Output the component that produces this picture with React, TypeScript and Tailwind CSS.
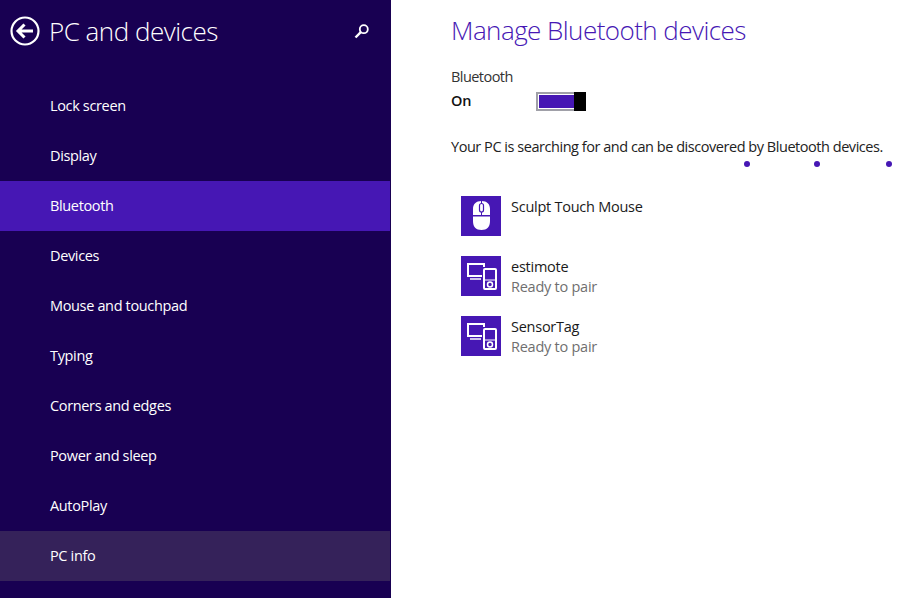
import { ReactNode } from "react";

const font = "font-['Open_Sans','Noto_Sans',sans-serif]";

const menu = [
  "Lock screen",
  "Display",
  "Bluetooth",
  "Devices",
  "Mouse and touchpad",
  "Typing",
  "Corners and edges",
  "Power and sleep",
  "AutoPlay",
  "PC info",
];

function BackIcon() {
  return (
    <svg width="30" height="30" viewBox="0 0 30 30" fill="none" stroke="white" className="shrink-0">
      <circle cx="15" cy="15" r="13.5" strokeWidth="2.2" />
      <path d="M8 15h15M14.5 8.5 8 15l6.5 6.5" strokeWidth="3" />
    </svg>
  );
}

function SearchIcon() {
  return (
    <svg width="16" height="16" viewBox="0 0 16 16" fill="none" stroke="white">
      <circle cx="9.8" cy="6.2" r="4" strokeWidth="1.8" />
      <path d="M6.8 9.2 1.5 14.5" strokeWidth="2.4" />
    </svg>
  );
}

function MouseIcon() {
  return (
    <svg width="40" height="40" viewBox="0 0 40 40">
      <path
        d="M12 13c0-5 3-8 8.500-8s8.500 3 8.500 8v6H12zM12 20.500h17V25c0 6-3 9-8.500 9S12 31 12 25z"
        fill="white"
      />
      <rect x="18.500" y="7.500" width="4" height="8.500" rx="2" fill="none" stroke="#4617b4" strokeWidth="1.200" />
      <path d="M20.500 5v2.500M20.500 16v3" stroke="#4617b4" strokeWidth="1" />
    </svg>
  );
}

function DeviceIcon() {
  return (
    <svg width="40" height="40" viewBox="0 0 40 40" fill="none">
      <path d="M21 20H7V8h16v3" stroke="white" strokeWidth="2" />
      <path d="M9 23h11" stroke="white" strokeWidth="1.500" />
      <rect x="23" y="13" width="12" height="20" rx="1" fill="#4617b4" stroke="white" strokeWidth="2" />
      <path d="M24 24h10" stroke="white" strokeWidth="1" />
      <circle cx="29" cy="28.500" r="2.500" stroke="white" strokeWidth="1.500" />
    </svg>
  );
}

function DeviceRow({ icon, name, status }: { icon: ReactNode; name: string; status?: string }) {
  return (
    <div className="flex h-[40px] items-start gap-[10px]">
      <div className="flex h-[40px] w-[40px] items-center justify-center bg-[#4617b4]">{icon}</div>
      <div className="mt-[1px] text-[14.5px] leading-[20px] tracking-[-0.25px]">
        <div className="text-[#1a1a1a]">{name}</div>
        {status && <div className="text-[#6f6f6f]">{status}</div>}
      </div>
    </div>
  );
}

export default function App() {
  return (
    <div className={`flex h-[598px] w-[904px] overflow-hidden bg-white ${font}`}>
      <aside className="h-full w-[391px] shrink-0 bg-[#180052] text-white">
        <header className="flex h-[81px] items-start pl-[10px] pr-[21px] pt-[16px]">
          <BackIcon />
          <h1 className="ml-[9px] mt-[-3px] text-[26px] font-light leading-[36px] tracking-[-0.5px]">PC and devices</h1>
          <div className="ml-auto mt-[7px]">
            <SearchIcon />
          </div>
        </header>
        <nav className="flex w-[390px] flex-col">
          {menu.map((item) => (
            <div
              key={item}
              className={`flex h-[50px] items-center pl-[50px] text-[14.5px] tracking-[-0.35px] ${
                item === "Bluetooth" ? "bg-[#4617b4]" : item === "PC info" ? "bg-[#35225a]" : ""
              }`}
            >
              {item}
            </div>
          ))}
        </nav>
      </aside>

      <main className="relative flex-1 pl-[60px] pt-[12px]">
        <h2 className="text-[26px] font-light leading-[36px] tracking-[-0.55px] text-[#4617b4]">Manage Bluetooth devices</h2>
        <div className="mt-[19px] text-[14.500px] leading-[20px] tracking-[-0.55px] text-[#333333]">Bluetooth</div>
        <div className="mt-[4px] flex h-[20px] items-center">
          <span className="w-[85px] text-[14.500px] font-semibold tracking-[-0.25px] text-[#111111]">On</span>
          <div className="flex h-[19px] w-[50px] items-stretch">
            <div className="flex-1 border-2 border-r-0 border-[#a0a0a8] py-[1px] pl-[1px]">
              <div className="h-full bg-[#4617b4]" />
            </div>
            <div className="w-[12px] bg-black" />
          </div>
        </div>
        <p className="mt-[26px] whitespace-nowrap text-[14.500px] leading-[20px] tracking-[-0.46px] text-[#222222]">
          Your PC is searching for and can be discovered by Bluetooth devices.
        </p>
        <div className="mt-[39px] flex flex-col gap-[20px] pl-[10px]">
          <DeviceRow icon={<MouseIcon />} name="Sculpt Touch Mouse" />
          <DeviceRow icon={<DeviceIcon />} name="estimote" status="Ready to pair" />
          <DeviceRow icon={<DeviceIcon />} name="SensorTag" status="Ready to pair" />
        </div>
        <span className="absolute left-[353px] top-[161px] h-[6px] w-[6px] rounded-full bg-[#4617b4]" />
        <span className="absolute left-[423px] top-[161px] h-[6px] w-[6px] rounded-full bg-[#4617b4]" />
        <span className="absolute left-[495px] top-[161px] h-[6px] w-[6px] rounded-full bg-[#4617b4]" />
      </main>
    </div>
  );
}
